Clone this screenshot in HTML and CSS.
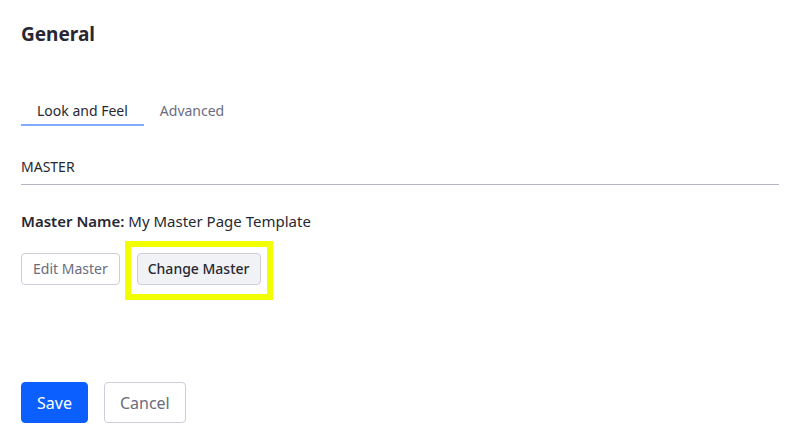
FILE: index.html
```html
<!DOCTYPE html>
<html>
<head>
<meta charset="utf-8">
<link rel="stylesheet" href="styles.css">
</head>
<body>
<div class="page">
  <h1 class="title">General</h1>
  <nav class="tabs">
    <span class="tab active">Look and Feel</span>
    <span class="tab">Advanced</span>
  </nav>
  <div class="section-head">MASTER</div>
  <p class="master-name"><strong>Master Name:</strong> My Master Page Template</p>
  <div class="btn-row">
    <button class="btn btn-light btn-edit">Edit Master</button>
    <span class="highlight"><button class="btn btn-secondary">Change Master</button></span>
  </div>
  <div class="footer">
    <button class="btn btn-primary btn-lg">Save</button>
    <button class="btn btn-light btn-lg">Cancel</button>
  </div>
</div>
</body>
</html>
```

FILE: styles.css
```css
* { box-sizing: border-box; }
html, body { margin: 0; padding: 0; background: #fff; }
body {
  font-family: "Noto Sans", "Open Sans", sans-serif;
  color: #272833;
}
.page {
  padding: 20px 21px 0 21px;
  width: 800px;
}
.title {
  margin: 0;
  font-size: 19px;
  line-height: 28px;
  font-weight: 700;
  color: #272833;
}
.tabs {
  display: flex;
  margin-top: 49px;
}
.tab {
  font-size: 14px;
  line-height: 20px;
  padding: 4px 16px 3px 16px;
  color: #6b6c7e;
  border-bottom: 2px solid transparent;
}
.tab.active {
  color: #272833;
  border-bottom-color: #80acff;
}
.section-head {
  margin-top: 31px;
  font-size: 14px;
  line-height: 20px;
  padding-bottom: 7px;
  border-bottom: 1px solid #b5b6c3;
  width: 758px;
  color: #272833;
}
.master-name {
  margin: 25px 0 0 0;
  font-size: 15px;
  line-height: 22px;
  color: #272833;
}
.master-name strong { font-weight: 600; }
.btn-row {
  display: flex;
  gap: 17px;
  margin-top: 21px;
  align-items: center;
}
.btn {
  font-family: inherit;
  font-size: 14px;
  line-height: 20px;
  border-radius: 4px;
  border: 1px solid #cdced9;
  padding: 5px 10px;
  height: 32px;
  cursor: pointer;
}
.btn-edit { padding: 5px 11px; }
.btn-light { background: #fff; color: #6b6c7e; }
.btn-secondary { background: #f1f2f5; color: #272833; font-weight: 500; }
.btn-primary { background: #0b5fff; border-color: #0b5fff; color: #fff; }
.btn-lg { font-size: 16px; height: 41px; padding: 8px 15px; }
.highlight {
  position: relative;
  display: inline-block;
}
.highlight .btn { display: block; }
.highlight::after {
  content: "";
  position: absolute;
  left: -12px; right: -12px; top: -12px; bottom: -15px;
  border: 6px solid #f2ff00;
  pointer-events: none;
}
.footer {
  display: flex;
  gap: 16px;
  margin-top: 97px;
}
```
